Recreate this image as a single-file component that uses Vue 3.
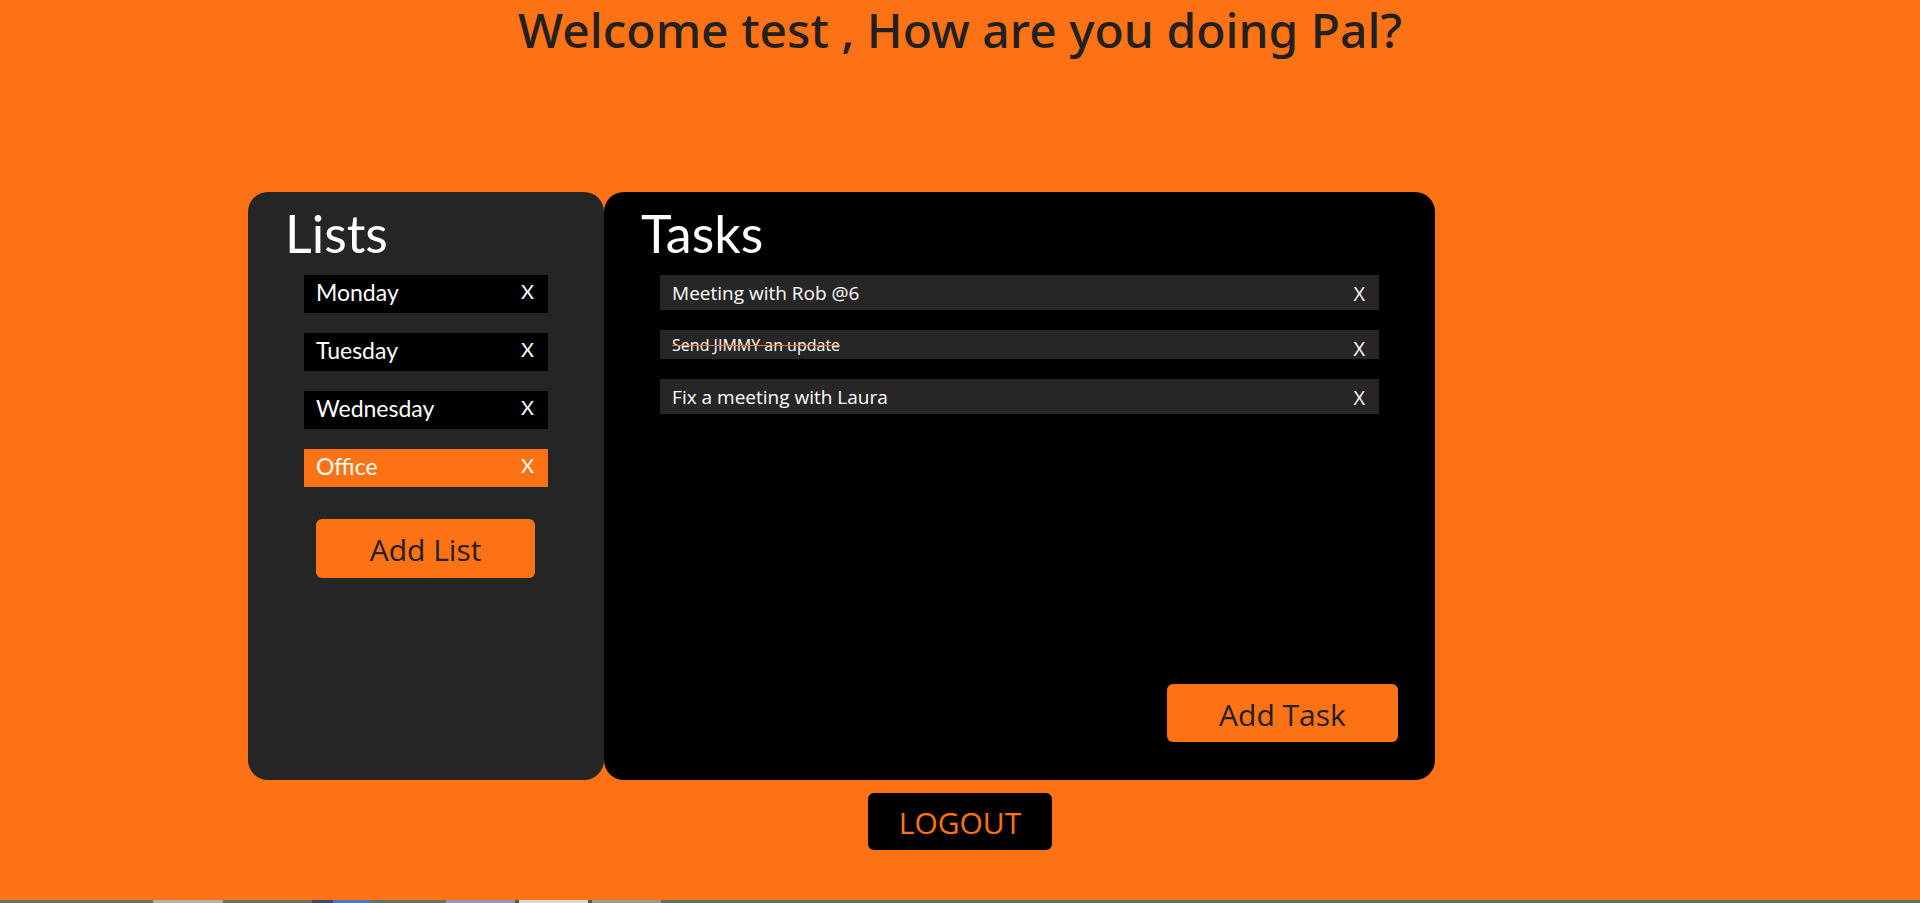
<script setup>
import { ref } from 'vue'

const lists = ref(['Monday', 'Tuesday', 'Wednesday', 'Office'])
const selected = ref('Office')
const tasks = ref([
  { text: 'Meeting with Rob @6', done: false },
  { text: 'Send JIMMY an update', done: true },
  { text: 'Fix a meeting with Laura', done: false },
])
</script>

<template>
  <div class="page">
    <main class="app">
      <h1 class="welcome">Welcome test , How are you doing Pal?</h1>

      <div class="board">
        <section class="panel lists">
          <h2>Lists</h2>
          <ul>
            <li v-for="name in lists" :key="name" :class="{ active: name === selected }">
              <button type="button" class="label" @click="selected = name">{{ name }}</button>
              <button type="button" class="remove" :aria-label="`Delete ${name}`">X</button>
            </li>
          </ul>
          <button type="button" class="action">Add List</button>
        </section>

        <section class="panel tasks">
          <h2>Tasks</h2>
          <ul>
            <li v-for="task in tasks" :key="task.text" :class="{ done: task.done }">
              <button type="button" class="label" @click="task.done = !task.done">{{ task.text }}</button>
              <button type="button" class="remove" :aria-label="`Delete ${task.text}`">X</button>
            </li>
          </ul>
          <button type="button" class="action">Add Task</button>
        </section>
      </div>

      <button type="button" class="logout">LOGOUT</button>
    </main>
    <div class="backdrop"></div>
  </div>
</template>

<style>
body {
  margin: 0;
  background: #fe7216;
}
</style>

<style scoped>
.page {
  min-height: 100vh;
  display: flex;
  flex-direction: column;
  box-sizing: border-box;
  background: #fe7216;
  font-family: "Open Sans", "Noto Sans", sans-serif;
  color: #232020;
}

.app {
  flex: 1;
  display: flex;
  flex-direction: column;
}

.welcome {
  margin: 0;
  height: 192px;
  font-family: "Noto Sans", "Open Sans", sans-serif;
  font-size: 48px;
  line-height: 60px;
  font-weight: 500;
  text-align: center;
}

.board {
  display: grid;
  grid-template-columns: 3fr 7fr;
  min-height: 588px;
  padding: 0 485px 0 248px;
}

.panel {
  display: flex;
  flex-direction: column;
  box-sizing: border-box;
  min-width: 0;
  padding: 12px 37px 38px;
  border-radius: 20px;
  color: #fff;
}

.lists {
  background: #252525;
  font-family: Lato, sans-serif;
}

.tasks {
  background: #000;
}

h2 {
  margin: 0;
  font-family: Lato, sans-serif;
  font-size: 52px;
  line-height: 58px;
  font-weight: 400;
}

ul {
  list-style: none;
  margin: 13px 19px 0;
  padding: 0;
  display: flex;
  flex-direction: column;
  gap: 20px;
}

li {
  display: flex;
  justify-content: space-between;
  align-items: flex-start;
  padding: 0 14px 0 12px;
}

button {
  border: 0;
  padding: 0;
  background: none;
  font: inherit;
  color: inherit;
  cursor: pointer;
}

.label {
  flex: 1;
  text-align: left;
}

.lists li {
  height: 38px;
  background: #000;
}

.lists li.active {
  background: #fe7216;
}

.lists .label {
  font-size: 23px;
  line-height: 35px;
}

.lists .remove {
  font-size: 20px;
  line-height: 33px;
}

.tasks li {
  height: 35px;
  background: #272525;
}

.tasks li.done {
  height: 29px;
}

.tasks .label {
  font-size: 19px;
  line-height: 36px;
}

.tasks .done .label {
  font-size: 16px;
  line-height: 30px;
  text-decoration: line-through #fe7216;
}

.tasks .remove {
  font-size: 20px;
  line-height: 38px;
}

.action,
.logout {
  font-family: "Open Sans", "Noto Sans", sans-serif;
  font-weight: 400;
  font-size: 30px;
  border-radius: 6px;
}

.action {
  height: 58px;
  padding-top: 2px;
  background: #fe7216;
  color: #232020;
}

.lists .action {
  height: 59px;
  margin: 32px 32px 0 31px;
}

.tasks .action {
  width: 231px;
  margin-top: auto;
  align-self: flex-end;
}

.logout {
  width: 184px;
  height: 57px;
  margin-top: 13px;
  padding-top: 2px;
  align-self: center;
  background: #000;
  color: #fe7216;
}

.backdrop {
  height: 3px;
  background: linear-gradient(
    90deg,
    #5f7565 0 153px,
    #a9b5aa 153px 223px,
    #5f7565 223px 312px,
    #3a4a70 312px 333px,
    #4876c8 333px 371px,
    #5f7565 371px 446px,
    #8a9dbd 446px 515px,
    #4c5a50 515px 519px,
    #d5d8d3 519px 588px,
    #4c5a50 588px 592px,
    #93a196 592px 661px,
    #587367 661px
  );
}
</style>
